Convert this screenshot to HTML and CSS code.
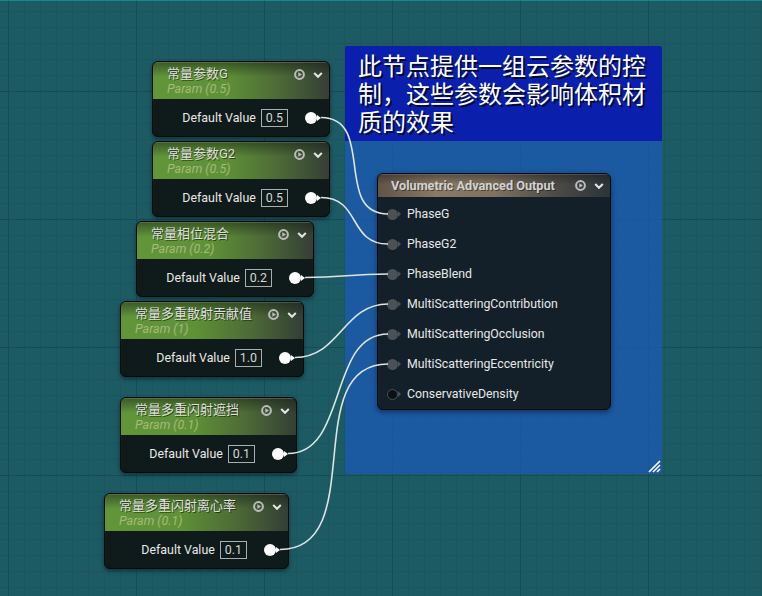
FILE: index.html
```html
<!DOCTYPE html>
<html>
<head>
<meta charset="utf-8">
<link rel="stylesheet" href="styles.css">
</head>
<body>
<div class="canvas">

  <div class="comment">
    <div class="comment-head">此节点提供一组云参数的控<br>制，这些参数会影响体积材<br>质的效果</div>
    <div class="comment-body"></div>
    <svg class="grip" width="14" height="14" viewBox="0 0 14 14">
      <path d="M13 2 L2 13 M13 6 L6 13 M13 10 L10 13" stroke="#ffffff" stroke-width="1.6" fill="none"/>
    </svg>
  </div>

  <div class="pnode n1">
    <div class="phead">
      <div class="ptitles"><div class="ptitle">常量参数G</div><div class="psub">Param (0.5)</div></div>
      <div class="picons">
        <svg class="i-play" width="11" height="11" viewBox="0 0 11 11"><circle cx="5.5" cy="5.5" r="4.4" fill="none" stroke="#bdbdbd" stroke-width="2"/><path d="M4.3 3.2 L8 5.5 L4.3 7.8 Z" fill="#bdbdbd"/></svg>
        <svg class="i-chev" width="10" height="10" viewBox="0 0 10 10"><path d="M1.2 3 L5 6.8 L8.8 3" fill="none" stroke="#e4e4e4" stroke-width="2"/></svg>
      </div>
    </div>
    <div class="pbody"><span class="plabel">Default Value</span><span class="pval">0.5</span><span class="ppin"><i class="dot"></i><i class="arr"></i></span></div>
  </div>

  <div class="pnode n2">
    <div class="phead">
      <div class="ptitles"><div class="ptitle">常量参数G2</div><div class="psub">Param (0.5)</div></div>
      <div class="picons">
        <svg class="i-play" width="11" height="11" viewBox="0 0 11 11"><circle cx="5.5" cy="5.5" r="4.4" fill="none" stroke="#bdbdbd" stroke-width="2"/><path d="M4.3 3.2 L8 5.5 L4.3 7.8 Z" fill="#bdbdbd"/></svg>
        <svg class="i-chev" width="10" height="10" viewBox="0 0 10 10"><path d="M1.2 3 L5 6.8 L8.8 3" fill="none" stroke="#e4e4e4" stroke-width="2"/></svg>
      </div>
    </div>
    <div class="pbody"><span class="plabel">Default Value</span><span class="pval">0.5</span><span class="ppin"><i class="dot"></i><i class="arr"></i></span></div>
  </div>

  <div class="pnode n3">
    <div class="phead">
      <div class="ptitles"><div class="ptitle">常量相位混合</div><div class="psub">Param (0.2)</div></div>
      <div class="picons">
        <svg class="i-play" width="11" height="11" viewBox="0 0 11 11"><circle cx="5.5" cy="5.5" r="4.4" fill="none" stroke="#bdbdbd" stroke-width="2"/><path d="M4.3 3.2 L8 5.5 L4.3 7.8 Z" fill="#bdbdbd"/></svg>
        <svg class="i-chev" width="10" height="10" viewBox="0 0 10 10"><path d="M1.2 3 L5 6.8 L8.8 3" fill="none" stroke="#e4e4e4" stroke-width="2"/></svg>
      </div>
    </div>
    <div class="pbody"><span class="plabel">Default Value</span><span class="pval">0.2</span><span class="ppin"><i class="dot"></i><i class="arr"></i></span></div>
  </div>

  <div class="pnode n4">
    <div class="phead">
      <div class="ptitles"><div class="ptitle">常量多重散射贡献值</div><div class="psub">Param (1)</div></div>
      <div class="picons">
        <svg class="i-play" width="11" height="11" viewBox="0 0 11 11"><circle cx="5.5" cy="5.5" r="4.4" fill="none" stroke="#bdbdbd" stroke-width="2"/><path d="M4.3 3.2 L8 5.5 L4.3 7.8 Z" fill="#bdbdbd"/></svg>
        <svg class="i-chev" width="10" height="10" viewBox="0 0 10 10"><path d="M1.2 3 L5 6.8 L8.8 3" fill="none" stroke="#e4e4e4" stroke-width="2"/></svg>
      </div>
    </div>
    <div class="pbody"><span class="plabel">Default Value</span><span class="pval">1.0</span><span class="ppin"><i class="dot"></i><i class="arr"></i></span></div>
  </div>

  <div class="pnode n5">
    <div class="phead">
      <div class="ptitles"><div class="ptitle">常量多重闪射遮挡</div><div class="psub">Param (0.1)</div></div>
      <div class="picons">
        <svg class="i-play" width="11" height="11" viewBox="0 0 11 11"><circle cx="5.5" cy="5.5" r="4.4" fill="none" stroke="#bdbdbd" stroke-width="2"/><path d="M4.3 3.2 L8 5.5 L4.3 7.8 Z" fill="#bdbdbd"/></svg>
        <svg class="i-chev" width="10" height="10" viewBox="0 0 10 10"><path d="M1.2 3 L5 6.8 L8.8 3" fill="none" stroke="#e4e4e4" stroke-width="2"/></svg>
      </div>
    </div>
    <div class="pbody"><span class="plabel">Default Value</span><span class="pval">0.1</span><span class="ppin"><i class="dot"></i><i class="arr"></i></span></div>
  </div>

  <div class="pnode n6">
    <div class="phead">
      <div class="ptitles"><div class="ptitle">常量多重闪射离心率</div><div class="psub">Param (0.1)</div></div>
      <div class="picons">
        <svg class="i-play" width="11" height="11" viewBox="0 0 11 11"><circle cx="5.5" cy="5.5" r="4.4" fill="none" stroke="#bdbdbd" stroke-width="2"/><path d="M4.3 3.2 L8 5.5 L4.3 7.8 Z" fill="#bdbdbd"/></svg>
        <svg class="i-chev" width="10" height="10" viewBox="0 0 10 10"><path d="M1.2 3 L5 6.8 L8.8 3" fill="none" stroke="#e4e4e4" stroke-width="2"/></svg>
      </div>
    </div>
    <div class="pbody"><span class="plabel">Default Value</span><span class="pval">0.1</span><span class="ppin"><i class="dot"></i><i class="arr"></i></span></div>
  </div>

  <div class="onode">
    <div class="ohead">
      <div class="otitle">Volumetric Advanced Output</div>
      <div class="picons">
        <svg class="i-play" width="11" height="11" viewBox="0 0 11 11"><circle cx="5.5" cy="5.5" r="4.4" fill="none" stroke="#bdbdbd" stroke-width="2"/><path d="M4.3 3.2 L8 5.5 L4.3 7.8 Z" fill="#bdbdbd"/></svg>
        <svg class="i-chev" width="10" height="10" viewBox="0 0 10 10"><path d="M1.2 3 L5 6.8 L8.8 3" fill="none" stroke="#e4e4e4" stroke-width="2"/></svg>
      </div>
    </div>
    <div class="obody">
      <div class="orow"><span class="opin"><i class="dot"></i><i class="arr"></i></span><span class="olabel">PhaseG</span></div>
      <div class="orow"><span class="opin"><i class="dot"></i><i class="arr"></i></span><span class="olabel">PhaseG2</span></div>
      <div class="orow"><span class="opin"><i class="dot"></i><i class="arr"></i></span><span class="olabel">PhaseBlend</span></div>
      <div class="orow"><span class="opin"><i class="dot"></i><i class="arr"></i></span><span class="olabel">MultiScatteringContribution</span></div>
      <div class="orow"><span class="opin"><i class="dot"></i><i class="arr"></i></span><span class="olabel">MultiScatteringOcclusion</span></div>
      <div class="orow"><span class="opin"><i class="dot"></i><i class="arr"></i></span><span class="olabel">MultiScatteringEccentricity</span></div>
      <div class="orow"><span class="opin hollow"><i class="dot"></i><i class="arr"></i></span><span class="olabel">ConservativeDensity</span></div>
    </div>
  </div>

  <svg class="wires" width="762" height="596" viewBox="0 0 762 596">
    <g fill="none" stroke="#dde4e4" stroke-width="1.6">
      <path d="M321 117.5 C376 117.5, 333 214, 388 214"/>
      <path d="M321 197.5 C361 197.5, 348 244, 388 244"/>
      <path d="M305 277.5 C345 277.5, 348 274, 388 274"/>
      <path d="M295 357.5 C340 357.5, 343 304, 388 304"/>
      <path d="M288 453.5 C348 453.5, 328 334, 388 334"/>
      <path d="M280 549.5 C370 549.5, 298 364, 388 364"/>
    </g>
  </svg>

</div>
</body>
</html>
```

FILE: styles.css
```css
html, body {
  margin: 0;
  padding: 0;
}

body {
  width: 762px;
  height: 596px;
  overflow: hidden;
  font-family: Roboto, "Noto Sans CJK SC", sans-serif;
}

.canvas {
  position: relative;
  width: 762px;
  height: 596px;
  overflow: hidden;
  background-color: #1d5b64;
  background-image:
    linear-gradient(to right, #174c55 1px, transparent 1px),
    linear-gradient(to bottom, #174c55 1px, transparent 1px),
    linear-gradient(to right, #1b565f 1px, transparent 1px),
    linear-gradient(to bottom, #1b565f 1px, transparent 1px);
  background-size: 128px 100%, 100% 128px, 16px 100%, 100% 16px;
  background-position: 8px 0, 0 91px, 8px 0, 0 11px;
  box-shadow: inset 0 1px 0 #14878f;
}

/* comment box */
.comment {
  position: absolute;
  left: 345px;
  top: 46px;
  width: 317px;
  height: 428px;
  display: flex;
  flex-direction: column;
  border-radius: 2px 2px 4px 4px;
  overflow: hidden;
}

.comment-head {
  background: #0a20ad;
  padding: 5px 8px 6px 13px;
  font-family: "Noto Sans CJK SC", sans-serif;
  font-size: 24px;
  line-height: 28px;
  color: #ffffff;
  text-shadow: 2px 2px 0 rgba(0, 0, 0, 0.75);
}

.comment-body {
  flex: 1;
  background: rgba(27, 88, 171, 0.86);
}

.grip {
  position: absolute;
  right: 1px;
  bottom: 1px;
}

/* param nodes */
.pnode {
  position: absolute;
  border: 1px solid #060909;
  border-radius: 6px;
  background: #0f1a1a;
  overflow: hidden;
  box-shadow: 0 2px 4px rgba(0, 0, 0, 0.45);
}

.n1 { left: 152px; top: 61px; width: 176px; }
.n2 { left: 152px; top: 141px; width: 176px; }
.n3 { left: 136px; top: 221px; width: 176px; }
.n4 { left: 120px; top: 301px; width: 182px; }
.n5 { left: 120px; top: 397px; width: 175px; }
.n6 { left: 104px; top: 493px; width: 183px; }

.phead {
  height: 37px;
  display: flex;
  align-items: flex-start;
  padding: 0 6px 0 14px;
  background:
    linear-gradient(to bottom, rgba(18, 28, 18, 0.5) 0%, rgba(18, 28, 18, 0) 40%),
    linear-gradient(to right, #62953a 0%, #5f9236 40%, #4e6c37 70%, #343f35 100%);
  box-shadow: inset 0 1px 0 rgba(140, 150, 140, 0.35);
}

.ptitles {
  flex: 1;
  padding-top: 4px;
}

.ptitle {
  font-size: 13px;
  line-height: 16px;
  color: #dedede;
  white-space: nowrap;
  text-shadow: 1px 1px 0 rgba(0, 0, 0, 0.5);
}

.psub {
  font-size: 12.5px;
  line-height: 14px;
  font-style: italic;
  color: #a7b87c;
  white-space: nowrap;
}

.picons {
  display: flex;
  align-items: center;
  gap: 8px;
  margin-top: 7px;
}

.picons svg {
  display: block;
}

.pbody {
  height: 37px;
  display: flex;
  align-items: center;
  justify-content: flex-end;
  padding-right: 8px;
}

.plabel {
  font-size: 12.4px;
  color: #e8e8e8;
  margin-right: 5px;
}

.pval {
  box-sizing: border-box;
  height: 18px;
  line-height: 16px;
  padding: 0 4px;
  border: 1px solid #a9aeae;
  font-size: 12.4px;
  color: #d6d6d6;
  margin-right: 17px;
}

.ppin {
  display: flex;
  align-items: center;
}

.ppin .dot {
  width: 12px;
  height: 12px;
  border-radius: 50%;
  background: #ffffff;
}

.ppin .arr {
  width: 0;
  height: 0;
  border-top: 3px solid transparent;
  border-bottom: 3px solid transparent;
  border-left: 4px solid #ffffff;
}

/* output node */
.onode {
  position: absolute;
  left: 377px;
  top: 173px;
  width: 232px;
  border: 1px solid #070b0e;
  border-radius: 6px;
  background: #13202a;
  overflow: hidden;
  box-shadow: 0 2px 5px rgba(0, 0, 0, 0.45);
}

.ohead {
  height: 23px;
  display: flex;
  align-items: center;
  padding: 0 6px 0 13px;
  background:
    linear-gradient(to bottom, rgba(25, 25, 25, 0.45) 0%, rgba(25, 25, 25, 0) 45%),
    linear-gradient(to right, #615446 0%, #8a7964 25%, #80725f 50%, #4f4c47 75%, #2b3438 100%);
  box-shadow: inset 0 1px 0 rgba(150, 150, 150, 0.3);
}

.otitle {
  flex: 1;
  font-size: 12.7px;
  font-weight: bold;
  color: #d2d2d2;
  white-space: nowrap;
  text-shadow: 1px 1px 0 rgba(0, 0, 0, 0.45);
}

.ohead .picons {
  margin-top: 0;
}

.obody {
  padding: 2px 0 0 9px;
}

.orow {
  height: 30px;
  display: flex;
  align-items: center;
}

.opin {
  display: flex;
  align-items: center;
  margin-right: 6px;
}

.opin .dot {
  box-sizing: border-box;
  width: 11px;
  height: 11px;
  border-radius: 50%;
  background: #4b5155;
}

.opin .arr {
  width: 0;
  height: 0;
  border-top: 3px solid transparent;
  border-bottom: 3px solid transparent;
  border-left: 3px solid #4b5155;
}

.opin.hollow .dot {
  background: #0b1014;
  border: 1.5px solid #4b5155;
}

.olabel {
  font-size: 12.3px;
  color: #e8e8e8;
  white-space: nowrap;
}

/* wires */
.wires {
  position: absolute;
  left: 0;
  top: 0;
  pointer-events: none;
}
```
